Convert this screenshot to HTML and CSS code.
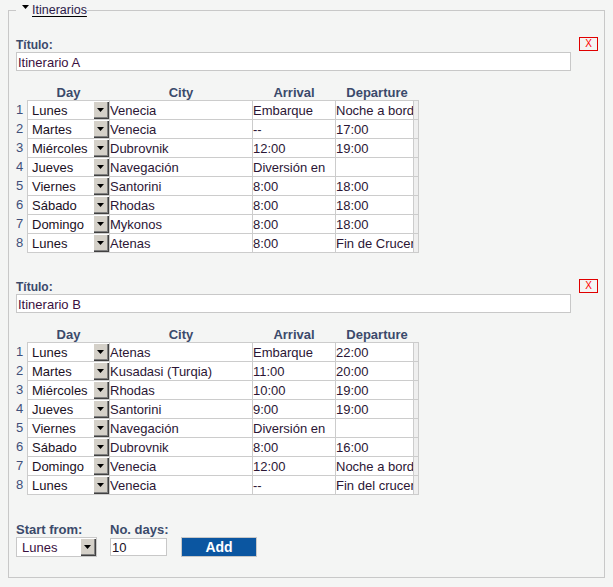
FILE: index.html
```html
<!DOCTYPE html>
<html lang="es">
<head>
<meta charset="utf-8">
<title>Itinerarios</title>
<link rel="stylesheet" href="styles.css">
</head>
<body>
<div class="page">
<fieldset class="box">
  <legend class="legend"><svg class="tri" width="7" height="4" viewBox="0 0 7 4"><path d="M0 0H7L3.5 4Z" fill="#000"/></svg><a class="legend-link" href="#">Itinerarios</a></legend>

  <div class="itin">
    <div class="itin-head"><span class="lbl">Título:</span><button class="del" type="button">X</button></div>
    <input class="title-in" type="text" value="Itinerario A">
    <div class="grid">
      <div class="hrow"><span class="num"></span><span class="h day">Day</span><span class="h city">City</span><span class="h arr">Arrival</span><span class="h dep">Departure</span></div>
      <div class="rows">
        <div class="row"><span class="num">1</span><div class="cell day"><span class="sv">Lunes</span><span class="sb"><svg width="7" height="4" viewBox="0 0 7 4"><path d="M0 0H7L3.5 4Z"/></svg></span></div><div class="cell city"><input class="ci" value="Venecia"></div><div class="cell arr"><input class="ci" value="Embarque"></div><div class="cell dep"><input class="ci" value="Noche a bordo"></div></div>
        <div class="row"><span class="num">2</span><div class="cell day"><span class="sv">Martes</span><span class="sb"><svg width="7" height="4" viewBox="0 0 7 4"><path d="M0 0H7L3.5 4Z"/></svg></span></div><div class="cell city"><input class="ci" value="Venecia"></div><div class="cell arr"><input class="ci" value="--"></div><div class="cell dep"><input class="ci" value="17:00"></div></div>
        <div class="row"><span class="num">3</span><div class="cell day"><span class="sv">Miércoles</span><span class="sb"><svg width="7" height="4" viewBox="0 0 7 4"><path d="M0 0H7L3.5 4Z"/></svg></span></div><div class="cell city"><input class="ci" value="Dubrovnik"></div><div class="cell arr"><input class="ci" value="12:00"></div><div class="cell dep"><input class="ci" value="19:00"></div></div>
        <div class="row"><span class="num">4</span><div class="cell day"><span class="sv">Jueves</span><span class="sb"><svg width="7" height="4" viewBox="0 0 7 4"><path d="M0 0H7L3.5 4Z"/></svg></span></div><div class="cell city"><input class="ci" value="Navegación"></div><div class="cell arr"><input class="ci" value="Diversión en"></div><div class="cell dep"><input class="ci" value=""></div></div>
        <div class="row"><span class="num">5</span><div class="cell day"><span class="sv">Viernes</span><span class="sb"><svg width="7" height="4" viewBox="0 0 7 4"><path d="M0 0H7L3.5 4Z"/></svg></span></div><div class="cell city"><input class="ci" value="Santorini"></div><div class="cell arr"><input class="ci" value="8:00"></div><div class="cell dep"><input class="ci" value="18:00"></div></div>
        <div class="row"><span class="num">6</span><div class="cell day"><span class="sv">Sábado</span><span class="sb"><svg width="7" height="4" viewBox="0 0 7 4"><path d="M0 0H7L3.5 4Z"/></svg></span></div><div class="cell city"><input class="ci" value="Rhodas"></div><div class="cell arr"><input class="ci" value="8:00"></div><div class="cell dep"><input class="ci" value="18:00"></div></div>
        <div class="row"><span class="num">7</span><div class="cell day"><span class="sv">Domingo</span><span class="sb"><svg width="7" height="4" viewBox="0 0 7 4"><path d="M0 0H7L3.5 4Z"/></svg></span></div><div class="cell city"><input class="ci" value="Mykonos"></div><div class="cell arr"><input class="ci" value="8:00"></div><div class="cell dep"><input class="ci" value="18:00"></div></div>
        <div class="row"><span class="num">8</span><div class="cell day"><span class="sv">Lunes</span><span class="sb"><svg width="7" height="4" viewBox="0 0 7 4"><path d="M0 0H7L3.5 4Z"/></svg></span></div><div class="cell city"><input class="ci" value="Atenas"></div><div class="cell arr"><input class="ci" value="8:00"></div><div class="cell dep"><input class="ci" value="Fin de Crucero"></div></div>
      </div>
    </div>
  </div>

  <div class="itin">
    <div class="itin-head"><span class="lbl">Título:</span><button class="del" type="button">X</button></div>
    <input class="title-in" type="text" value="Itinerario B">
    <div class="grid">
      <div class="hrow"><span class="num"></span><span class="h day">Day</span><span class="h city">City</span><span class="h arr">Arrival</span><span class="h dep">Departure</span></div>
      <div class="rows">
        <div class="row"><span class="num">1</span><div class="cell day"><span class="sv">Lunes</span><span class="sb"><svg width="7" height="4" viewBox="0 0 7 4"><path d="M0 0H7L3.5 4Z"/></svg></span></div><div class="cell city"><input class="ci" value="Atenas"></div><div class="cell arr"><input class="ci" value="Embarque"></div><div class="cell dep"><input class="ci" value="22:00"></div></div>
        <div class="row"><span class="num">2</span><div class="cell day"><span class="sv">Martes</span><span class="sb"><svg width="7" height="4" viewBox="0 0 7 4"><path d="M0 0H7L3.5 4Z"/></svg></span></div><div class="cell city"><input class="ci" value="Kusadasi (Turqia)"></div><div class="cell arr"><input class="ci" value="11:00"></div><div class="cell dep"><input class="ci" value="20:00"></div></div>
        <div class="row"><span class="num">3</span><div class="cell day"><span class="sv">Miércoles</span><span class="sb"><svg width="7" height="4" viewBox="0 0 7 4"><path d="M0 0H7L3.5 4Z"/></svg></span></div><div class="cell city"><input class="ci" value="Rhodas"></div><div class="cell arr"><input class="ci" value="10:00"></div><div class="cell dep"><input class="ci" value="19:00"></div></div>
        <div class="row"><span class="num">4</span><div class="cell day"><span class="sv">Jueves</span><span class="sb"><svg width="7" height="4" viewBox="0 0 7 4"><path d="M0 0H7L3.5 4Z"/></svg></span></div><div class="cell city"><input class="ci" value="Santorini"></div><div class="cell arr"><input class="ci" value="9:00"></div><div class="cell dep"><input class="ci" value="19:00"></div></div>
        <div class="row"><span class="num">5</span><div class="cell day"><span class="sv">Viernes</span><span class="sb"><svg width="7" height="4" viewBox="0 0 7 4"><path d="M0 0H7L3.5 4Z"/></svg></span></div><div class="cell city"><input class="ci" value="Navegación"></div><div class="cell arr"><input class="ci" value="Diversión en"></div><div class="cell dep"><input class="ci" value=""></div></div>
        <div class="row"><span class="num">6</span><div class="cell day"><span class="sv">Sábado</span><span class="sb"><svg width="7" height="4" viewBox="0 0 7 4"><path d="M0 0H7L3.5 4Z"/></svg></span></div><div class="cell city"><input class="ci" value="Dubrovnik"></div><div class="cell arr"><input class="ci" value="8:00"></div><div class="cell dep"><input class="ci" value="16:00"></div></div>
        <div class="row"><span class="num">7</span><div class="cell day"><span class="sv">Domingo</span><span class="sb"><svg width="7" height="4" viewBox="0 0 7 4"><path d="M0 0H7L3.5 4Z"/></svg></span></div><div class="cell city"><input class="ci" value="Venecia"></div><div class="cell arr"><input class="ci" value="12:00"></div><div class="cell dep"><input class="ci" value="Noche a bordo"></div></div>
        <div class="row"><span class="num">8</span><div class="cell day"><span class="sv">Lunes</span><span class="sb"><svg width="7" height="4" viewBox="0 0 7 4"><path d="M0 0H7L3.5 4Z"/></svg></span></div><div class="cell city"><input class="ci" value="Venecia"></div><div class="cell arr"><input class="ci" value="--"></div><div class="cell dep"><input class="ci" value="Fin del crucero"></div></div>
      </div>
    </div>
  </div>

  <div class="add-bar">
    <div class="field field-start">
      <span class="blbl">Start from:</span>
      <div class="sel-b"><span class="sv">Lunes</span><span class="sb"><svg width="7" height="4" viewBox="0 0 7 4"><path d="M0 0H7L3.5 4Z"/></svg></span></div>
    </div>
    <div class="field field-days">
      <span class="blbl">No. days:</span>
      <input class="days-in" type="text" value="10">
    </div>
    <button class="add-btn" type="button">Add</button>
  </div>
</fieldset>
</div>
</body>
</html>
```

FILE: styles.css
```css
html, body {
  margin: 0;
  padding: 0;
  background: #f4f5f4;
}

body {
  font-family: "Liberation Sans", Arial, sans-serif;
  font-size: 13px;
  color: #2b1635;
}

.page {
  padding: 3px 8px 0;
}

.box {
  margin: 0;
  min-width: 0;
  border: 1px solid #c8c8c8;
  padding: 21px 6px 20px 7px;
}

.legend {
  padding: 0;
  margin: 0;
  font-size: 12.5px;
  line-height: 15px;
  height: 15px;
}

.tri {
  margin-left: 6px;
  margin-right: 3px;
  vertical-align: 5px;
}

.legend-link {
  color: #2c1a4a;
  text-decoration: underline;
  text-decoration-color: #000;
  text-underline-offset: 2px;
}

/* itinerary block */
.itin + .itin {
  margin-top: 28px;
}

.itin-head {
  display: flex;
  justify-content: space-between;
  align-items: flex-start;
  height: 13px;
}

.lbl {
  font-size: 12px;
  font-weight: bold;
  line-height: 13px;
  color: #3b4a6b;
}

.del {
  margin-top: -2px;
  width: 19px;
  height: 14px;
  padding: 0;
  border: 1px solid #e00000;
  background: transparent;
  color: #ff0000;
  font-family: "Liberation Sans", Arial, sans-serif;
  font-size: 10px;
  line-height: 12px;
  text-align: center;
}

.title-in {
  display: block;
  box-sizing: border-box;
  width: 555px;
  height: 19px;
  margin: 0;
  padding: 1px 1px 0;
  border: 1px solid #c8c8c8;
  background: #fff;
  font-family: inherit;
  font-size: 13px;
  color: #3a1040;
  outline: none;
}

.grid {
  margin-top: 14px;
}

.hrow {
  display: flex;
  height: 15px;
  line-height: 15px;
}

.h {
  font-weight: bold;
  text-align: center;
  color: #3b4a6b;
  box-sizing: border-box;
}

.num {
  width: 11px;
  flex: none;
  color: #3f4f7a;
  line-height: 20px;
}

.row {
  display: flex;
  height: 20px;
  margin-top: -1px;
}

.row:first-child {
  margin-top: 0;
}

.cell {
  box-sizing: border-box;
  height: 20px;
  border: 1px solid #cccccc;
  background: #fff;
  flex: none;
}

.day { width: 83px; flex: none; }
.city { width: 144px; margin-left: -1px; flex: none; }
.arr { width: 84px; margin-left: -1px; flex: none; }
.dep { width: 84px; margin-left: -1px; flex: none; }

.cell.day {
  display: flex;
}

.sv {
  flex: 1;
  padding: 1px 0 0 4px;
  line-height: 17px;
  white-space: nowrap;
  overflow: hidden;
  color: #1a0f24;
}

.sb {
  width: 16px;
  height: 18px;
  flex: none;
  box-sizing: border-box;
  background: #d4d0c8;
  box-shadow: inset 1px 1px 0 #ffffff, inset -1px -1px 0 #404040, inset -2px -2px 0 #808080;
  display: flex;
  align-items: center;
  justify-content: center;
}

.sb svg {
  margin: 0 1px 1px 0;
}

.ci {
  display: block;
  box-sizing: border-box;
  width: 100%;
  height: 18px;
  margin: 0;
  padding: 1px 0 0;
  border: 0;
  background: transparent;
  font-family: inherit;
  font-size: 13px;
  color: #2b1635;
  outline: none;
}

.cell.dep {
  background: #efefef;
  padding-right: 4px;
}

.cell.dep .ci {
  background: #fff;
  border-right: 1px solid #cccccc;
}

/* bottom add bar */
.add-bar {
  display: flex;
  align-items: flex-end;
  margin-top: 27px;
}

.field {
  display: flex;
  flex-direction: column;
  white-space: nowrap;
}

.field-start {
  width: 81px;
}

.field-days {
  width: 57px;
  margin-left: 13px;
}

.blbl {
  font-size: 13px;
  font-weight: bold;
  line-height: 15px;
  color: #3b4a6b;
}

.sel-b {
  display: flex;
  box-sizing: border-box;
  width: 81px;
  height: 20px;
  border: 1px solid #c8c8c8;
  background: #fff;
}

.sel-b .sv {
  padding-left: 5px;
  color: #3a1040;
}

.days-in {
  box-sizing: border-box;
  width: 57px;
  height: 18px;
  margin: 1px 0 1px;
  padding: 1px 1px 0;
  border: 1px solid #c8c8c8;
  background: #fff;
  font-family: inherit;
  font-size: 13px;
  color: #1a0f24;
  outline: none;
}

.add-btn {
  box-sizing: border-box;
  width: 76px;
  height: 20px;
  margin-left: 14px;
  padding: 0;
  border: 1px solid #c8c8c8;
  background: #0b56a1;
  color: #fff;
  font-family: "Liberation Sans", Arial, sans-serif;
  font-size: 14px;
  font-weight: bold;
  line-height: 18px;
}
```
